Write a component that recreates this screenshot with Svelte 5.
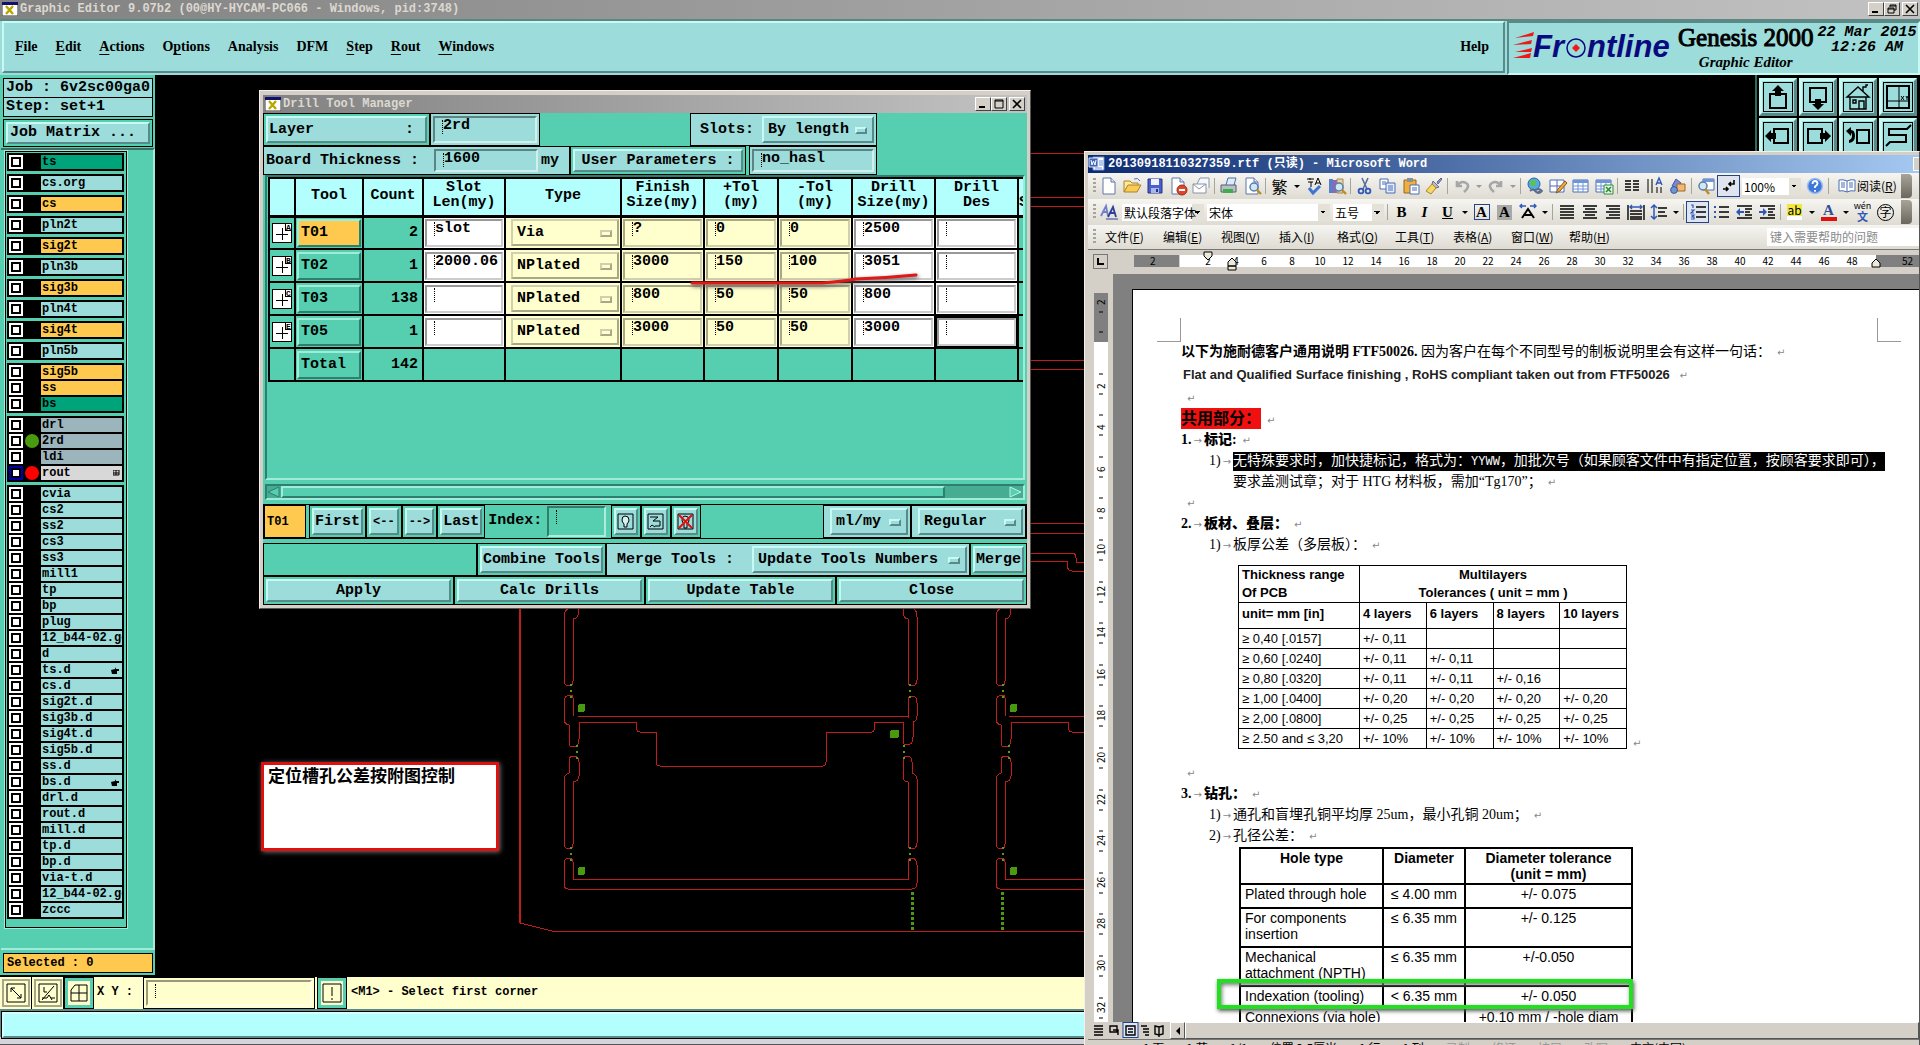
<script lang="ts">
  type Layer = { name: string; tone?: string; dot?: string; mark?: string };

  const menus = [
    ["", "F", "ile"],
    ["", "E", "dit"],
    ["", "A", "ctions"],
    ["O", "p", "tions"],
    ["Analysis", "", ""],
    ["DFM", "", ""],
    ["", "S", "tep"],
    ["", "R", "out"],
    ["", "W", "indows"],
  ];

  const layerGroups: Layer[][] = [
    [{ name: "ts", tone: "green" }],
    [{ name: "cs.org" }],
    [{ name: "cs", tone: "orange" }],
    [{ name: "pln2t" }],
    [{ name: "sig2t", tone: "orange" }],
    [{ name: "pln3b" }],
    [{ name: "sig3b", tone: "orange" }],
    [{ name: "pln4t" }],
    [{ name: "sig4t", tone: "orange" }],
    [{ name: "pln5b" }],
    [
      { name: "sig5b", tone: "orange" },
      { name: "ss", tone: "orange" },
      { name: "bs", tone: "green" },
    ],
    [
      { name: "drl", tone: "slate" },
      { name: "2rd", tone: "slate", dot: "lime" },
      { name: "ldi", tone: "slate" },
      { name: "rout", tone: "grey", dot: "red", mark: "grid" },
    ],
    [
      ..."cvia cs2 ss2 cs3 ss3 mill1 tp bp plug 12_b44-02.ge d".split(" ").map((name) => ({ name })),
      { name: "ts.d", mark: "hand" },
      ..."cs.d sig2t.d sig3b.d sig4t.d sig5b.d ss.d".split(" ").map((name) => ({ name })),
      { name: "bs.d", mark: "hand" },
      ..."drl.d rout.d mill.d tp.d bp.d via-t.d 12_b44-02.ge zccc".split(" ").map((name) => ({ name })),
    ],
  ];

  const tools = [
    { key: "A", tool: "T01", count: 2, slot: "slot", type: "Via", finish: "?", plus: "0", minus: "0", drill: "2500" },
    { key: "B", tool: "T02", count: 1, slot: "2000.06", type: "NPlated", finish: "3000", plus: "150", minus: "100", drill: "3051" },
    { key: "C", tool: "T03", count: 138, slot: "", type: "NPlated", finish: "800", plus: "50", minus: "50", drill: "800" },
    { key: "E", tool: "T05", count: 1, slot: "", type: "NPlated", finish: "3000", plus: "50", minus: "50", drill: "3000" },
  ];

  const viewTools = [
    ["Pan up", '<path d="M12 12H7v14h16V12h-5" fill="none" stroke="#000" stroke-width="2"/><path d="M15 3l6 6h-3v5h-6V9H9z"/>'],
    ["Pan down", '<path d="M12 20H7V6h16v14h-5" fill="none" stroke="#000" stroke-width="2"/><path d="M15 28l6-6h-3v-5h-6v5H9z"/>'],
    ["Home", '<path d="M4 15L15 5l11 10zM7 15v12h16V15M16 27v-8h5v8M10 18h3v3h-3zM20 9V5h3V3h2" fill="none" stroke="#000" stroke-width="1.4"/>'],
    ["Origin", '<path d="M4 4h22v22H4z" fill="none" stroke="#000" stroke-width="2"/><path d="M16 4v22M4 19h22" stroke="#000"/><path d="M18 14l3 4M21 14l-3 4M23 14l1 2 1-2M24 16v2" fill="none" stroke="#000"/>'],
    ["Pan left", '<path d="M11 11V7h14v14H11v-4" fill="none" stroke="#000" stroke-width="2"/><path d="M2 14l6-6v3h5v6H8v3z"/>'],
    ["Pan right", '<path d="M19 11V7H5v14h14v-4" fill="none" stroke="#000" stroke-width="2"/><path d="M28 14l-6-6v3h-5v6h5v3z"/>'],
    ["Previous view", '<path d="M14 8h12v13H14z" fill="none" stroke="#000" stroke-width="2"/><path d="M3 9l5-4v3q4 0 4 6t-6 7v-3q3-1 3-4t-1-3v3z"/>'],
    ["Serpentine", '<path d="M28 3l-4 4H6v6h17v7H7l-4 4" fill="none" stroke="#000" stroke-width="2"/>'],
  ];

  const page = '<path d="M4 2h8l4 4v12H4z" fill="#fff" stroke="#5f76a8"/><path d="M12 2v4h4" fill="#dbe6fa" stroke="#5f76a8"/>';
  const lens = '<circle cx="12" cy="11" r="4" fill="#cfe8f8" stroke="#5a7fa8" stroke-width="1.5"/><path d="M15 14l4 4" stroke="#c08a20" stroke-width="2.4"/>';
  const grid = '<path d="M2 4h15v12H2z" fill="#fff" stroke="#4a6cb4"/><path d="M2 4h15v3H2z" fill="#6f95d8"/><path d="M2 10h15M2 13h15M7 4v12M12 4v12" stroke="#6f95d8"/>';
  const lines = (rows: [number, number][]) =>
    `<path d="${rows.map(([x, w], i) => `M${x} ${4 + i * 3}h${w}`).join("")}" stroke="#000" stroke-width="1.6"/>`;

  const icons: Record<string, string> = {
    New: page,
    Open: '<path d="M2 16V5h6l2 2h6v3" fill="#ffe9a0" stroke="#a8822a"/><path d="M2 16l4-7h13l-4 7z" fill="#fbcb55" stroke="#a8822a"/><path d="M12 3q4-2 6 2" fill="none" stroke="#4a78c0"/>',
    Save: '<path d="M3 3h14v14H3z" fill="#4a5fc8" stroke="#26348a"/><path d="M6 3h8v6H6z" fill="#eef2ff"/><path d="M6 12h8v5H6z" fill="#aab6ea"/><path d="M11 13h2v3h-2z" fill="#26348a"/>',
    Permission: page + '<circle cx="14" cy="14" r="5" fill="#e0452a" stroke="#a02a16"/><path d="M11 14h6" stroke="#fff" stroke-width="2"/>',
    Mail: '<path d="M6 8l3-6h9v10" fill="#f6f8fc" stroke="#8894a8"/><path d="M2 8h13v9H2z" fill="#fff" stroke="#8894a8"/><path d="M2 8l6 5 7-5" fill="none" stroke="#8894a8"/>',
    Print: '<path d="M7 9l2-7h8l-2 7" fill="#dcecff" stroke="#4f6f9f"/><path d="M2 9h15v7H2z" fill="#b6bfc9" stroke="#56606c"/><path d="M4 13h10v4H4z" fill="#3fae4a"/>',
    Preview: page + lens,
    Spelling: '<path d="M3 3h7M6 2v2M4 6h5M7 6v5M11 9l3-7 3 7M12 7h4" fill="none" stroke="#000"/><path d="M5 12l4 5 7-7" fill="none" stroke="#3f74d6" stroke-width="3"/>',
    Research: '<path d="M2 3h4v14H2z" fill="#5a7fc8"/><path d="M6 4h4v13H6z" fill="#9a64b4"/><path d="M10 3h6v14h-6z" fill="#e8d8a8" stroke="#a08850"/>' + lens,
    Cut: '<path d="M7 2l5 11M13 2L8 13" stroke="#5a6f9a" stroke-width="1.6"/><circle cx="6" cy="15" r="2.4" fill="none" stroke="#2f58b8" stroke-width="1.8"/><circle cx="13" cy="15" r="2.4" fill="none" stroke="#2f58b8" stroke-width="1.8"/>',
    Copy: '<path d="M2 3h8v10H2z" fill="#fff" stroke="#4a6cb4"/><path d="M8 7h9v10H8z" fill="#e4edff" stroke="#4a6cb4"/><path d="M4 6h4M4 8h4M10 10h5M10 12h5M10 14h5" stroke="#4a6cb4"/>',
    Paste: '<path d="M3 4h12v13H3z" fill="#f0b040" stroke="#95681a"/><path d="M6 2h6v4H6z" fill="#8a8f98"/><path d="M9 9h9v9H9z" fill="#fff" stroke="#4a6cb4"/><path d="M11 12h5M11 14h5" stroke="#4a6cb4"/>',
    Brush: '<path d="M13 6l4-4 1 1-4 5z" fill="#8c98c8" stroke="#5a6494"/><path d="M9 5l6 6-3 1-4-4z" fill="#b8b8c8" stroke="#6a6a80"/><path d="M8 8l4 4-5 6-5-3z" fill="#f8d860" stroke="#a88a28"/>',
    Undo: '<path d="M5 5v5h5M5 10q4-6 9-3t-2 9" fill="none" stroke="#a6a6a6" stroke-width="2.6"/>',
    Redo: '<path d="M15 5v5h-5M15 10q-4-6-9-3t2 9" fill="none" stroke="#a6a6a6" stroke-width="2.6"/>',
    Hyperlink: '<circle cx="9" cy="8" r="6" fill="#54a8e8" stroke="#2a64a0"/><path d="M5 5q4-3 6 0t-3 6q-4-1-3-6" fill="#5cc060"/><path d="M5 15q3-3 5 0t5 0M10 15q3-4 7 0-3 4-7 0" fill="none" stroke="#5a6c8c" stroke-width="1.8"/>',
    Borders: '<path d="M2 4h14v12H2z" fill="#fff" stroke="#4a6cb4"/><path d="M9 4v12M2 10h14" stroke="#4a6cb4"/><path d="M8 17l2-4 7-8 2 2-7 8z" fill="#f0a840" stroke="#8a5a14"/>',
    Table: grid,
    Excel: grid + '<path d="M10 9h9v9h-9z" fill="#e6f6e6" stroke="#2f8a3a"/><path d="M12 11l5 5M17 11l-5 5" stroke="#2f8a3a" stroke-width="1.6"/>',
    Columns: '<path d="M3 5h6M3 8h6M3 11h6M3 14h6M11 5h6M11 8h6M11 11h6M11 14h6" stroke="#000" stroke-width="1.6"/>',
    Direction: '<path d="M3 3v14M7 3v14M12 11v6M16 11v6" stroke="#000"/><path d="M11 9l3-7 3 7M12 7h4" fill="none" stroke="#2f58b8" stroke-width="1.4"/>',
    Drawing: '<path d="M4 10l4-7 5 4-2 6z" fill="#7a88d8" stroke="#4a54a0"/><path d="M9 8h8v7H9z" fill="#f4b870" stroke="#9a6a28"/><circle cx="6" cy="14" r="3.4" fill="#6f95d8" stroke="#3a5a9a"/>',
    Map: '<path d="M7 3h11v11H7z" fill="#fff" stroke="#4a6cb4"/><path d="M7 3h11v3H7z" fill="#6f95d8"/><circle cx="7" cy="10" r="4" fill="#cfe8f8" stroke="#5a7fa8" stroke-width="1.5"/><path d="M9 13l4 5" stroke="#c08a20" stroke-width="2.4"/>',
    Marks: '<path d="M15 4v4h-5M12 6l-2 2 2 2M4 13h5M7 11l2 2-2 2" fill="none" stroke="#000" stroke-width="1.6"/>',
    Help: '<circle cx="10" cy="10" r="7.5" fill="#3f78d8" stroke="#9fc0f0" stroke-width="1.5"/><path d="M7.5 8q0-3 2.500-3t2.500 2.500q0 1.500-2.500 3v1.500M10 14v1.800" fill="none" stroke="#fff" stroke-width="1.8"/>',
    Read: '<path d="M2 4q4-1 8 1 4-2 8-1v11q-4-1-8 1-4-2-8-1z" fill="#fff" stroke="#4a6cb4"/><path d="M10 5v11M4 7h4M4 9h4M4 11h4M12 7h4M12 9h4M12 11h4" stroke="#4a6cb4"/>',
    Styles: '<path d="M2 14l5-10 2 10M4 10h5" fill="none" stroke="#6f7fc8" stroke-width="1.8"/><path d="M9 15l5-10 3 10M11 11h5" fill="none" stroke="#2f3f98" stroke-width="1.8"/><path d="M7 17h12" stroke="#2f3f98"/>',
    Scale: '<path d="M4 16l6-9 6 9M6 13h8" fill="none" stroke="#000" stroke-width="2"/><path d="M2 4h6M12 4h6M4 2L2 4l2 2M16 2l2 2-2 2" fill="none" stroke="#2f58b8" stroke-width="1.4"/>',
    Justify: lines([[3, 14], [3, 14], [3, 14], [3, 14], [3, 14]]),
    Center: lines([[3, 14], [5, 10], [3, 14], [5, 10], [3, 14]]),
    Right: lines([[3, 14], [6, 11], [3, 14], [6, 11], [3, 14]]),
    Distribute: '<path d="M2 3v15M18 3v15M4 9h12M4 12h12M4 15h12M4 17h12" stroke="#000" stroke-width="1.4"/><path d="M4 5h12M6 3L4 5l2 2M14 3l2 2-2 2" fill="none" stroke="#2f58b8" stroke-width="1.4"/>',
    Spacing: '<path d="M9 6h9M9 10h7M9 14h9" stroke="#000" stroke-width="1.6"/><path d="M5 3v14M2 6l3-3 3 3M2 14l3 3 3-3" fill="none" stroke="#2f58b8" stroke-width="1.5"/>',
    Numbering: '<path d="M8 5h10M8 10h10M8 15h10" stroke="#000" stroke-width="1.4"/><path d="M3 3h2v3M3 8h3l-3 3h3M3 13h3l-2 2h2v2H3" fill="none" stroke="#2f58b8" stroke-width="1.2"/>',
    Bullets: '<path d="M8 5h10M8 10h10M8 15h10" stroke="#000" stroke-width="1.4"/><path d="M3 4h2v2H3zM3 9h2v2H3zM3 14h2v2H3z" fill="#2f58b8"/>',
    Outdent: '<path d="M3 4h15M11 7h7M11 10h5M11 13h7M3 16h15" stroke="#000" stroke-width="1.6"/><path d="M2 10l4-4v3h4v2H6v3z" fill="#2f58b8"/>',
    Indent: '<path d="M3 4h15M11 7h7M11 10h5M11 13h7M3 16h15" stroke="#000" stroke-width="1.6"/><path d="M10 10L6 6v3H2v2h4v3z" fill="#2f58b8"/>',
  };

  const toolbar = [
    "New", "Open", "Save", "Permission", "Mail", "|", "Print", "Preview", "|", "繁", "v", "Spelling", "Research", "|",
    "Cut", "Copy", "Paste", "Brush", "|", "Undo", "w", "Redo", "w", "|", "Hyperlink", "Borders", "Table", "Excel", "|",
    "Columns", "Direction", "Drawing", "|", "Map", "Marks",
  ];
  const formatting = [
    "|", "B", "I", "U", "v", "boxed", "shaded", "Scale", "v", "|", "Justify", "Center", "Right", "Distribute", "Spacing",
    "v", "|", "Numbering", "Bullets", "Outdent", "Indent", "|", "ab", "v", "color", "v", "wén", "字",
  ];
  const wordMenus = [
    ["文件", "F"], ["编辑", "E"], ["视图", "V"], ["插入", "I"], ["格式", "O"],
    ["工具", "T"], ["表格", "A"], ["窗口", "W"], ["帮助", "H"],
  ];

  const rulerMarks = Array.from({ length: 24 }, (_, i) => 2 + i * 2);
  const sideMarks = Array.from({ length: 16 }, (_, i) => 2 + i * 2);

  const thickness = [
    ["≥ 0,40 [.0157]", "+/- 0,11", "", "", ""],
    ["≥ 0,60 [.0240]", "+/- 0,11", "+/- 0,11", "", ""],
    ["≥ 0,80 [.0320]", "+/- 0,11", "+/- 0,11", "+/- 0,16", ""],
    ["≥ 1,00  [.0400]", "+/- 0,20", "+/- 0,20", "+/- 0,20", "+/- 0,20"],
    ["≥ 2,00  [.0800]", "+/- 0,25", "+/- 0,25", "+/- 0,25", "+/- 0,25"],
    ["≥ 2.50 and  ≤ 3,20", "+/- 10%", "+/- 10%", "+/- 10%", "+/- 10%"],
  ];
  const holes = [
    ["Plated through hole", "≤ 4.00 mm", "+/- 0.075"],
    ["For components insertion", "≤ 6.35 mm", "+/- 0.125"],
    ["Mechanical attachment (NPTH)", "≤ 6.35 mm", "+/-0.050"],
    ["Indexation (tooling)", "< 6.35 mm", "+/- 0.050"],
  ];
</script>

{#snippet icon(name: string)}
  <svg class="icon" width="20" height="20" viewBox="0 0 20 20" aria-hidden="true">{@html icons[name]}</svg>
{/snippet}

{#snippet entry(label: string, value: string)}
  <span class="entry"><input aria-label={label} {value} /></span>
{/snippet}

{#snippet pick(label: string, value: string)}
  <span class="pick"><select aria-label={label}><option>{value}</option></select></span>
{/snippet}

{#snippet appIcon()}
  <svg class="app-icon" width="16" height="14" viewBox="0 0 16 14" aria-hidden="true">
    <path d="M0 0h16v14H0z" fill="#fff" stroke="#333" />
    <path d="M0 0h16v3H0z" fill="#101070" />
    <path d="M4 4l7 8M11 4l-7 8" stroke="#b8a800" stroke-width="2.400" />
  </svg>
{/snippet}

{#snippet windowButtons(restore: boolean)}
  <span class="win-buttons">
    <button aria-label="Minimize"><svg width="12" height="10"><path d="M2 8h6" stroke="#000" stroke-width="2" /></svg></button>
    <button aria-label="Maximize">
      <svg width="12" height="10">
        {#if restore}
          <path d="M4 3V1h6v5H8M2 4h6v5H2zM4 2h6M2 5h6" fill="none" stroke="#000" />
        {:else}
          <path d="M2 1h8v8H2zM2 2h8" fill="none" stroke="#000" />
        {/if}
      </svg>
    </button>
    <button class="close" aria-label="Close"><svg width="12" height="10"><path d="M2 1l8 8M10 1l-8 8" stroke="#000" stroke-width="1.600" /></svg></button>
  </span>
{/snippet}

{#snippet bar(items: string[])}
  {#each items as item}
    {#if item === "|"}
      <span class="sep"></span>
    {:else if item === "v" || item === "w"}
      <button class="drop" class:faded={item === "w"} aria-label="More options"></button>
    {:else if icons[item]}
      <button class="tb" class:on={item === "Marks" || item === "Numbering"} aria-label={item}>{@render icon(item)}</button>
    {:else if item === "boxed" || item === "shaded"}
      <button class="tb serif {item}"><span>A</span></button>
    {:else if item === "ab"}
      <button class="tb mark"><span>ab</span></button>
    {:else if item === "color"}
      <button class="tb serif color"><span>A</span></button>
    {:else if item === "wén"}
      <button class="tb pinyin"><span>wén</span><b>文</b></button>
    {:else if item === "字"}
      <button class="tb ring"><span>字</span></button>
    {:else if item === "繁"}
      <button class="tb trad">繁</button>
    {:else}
      <button class="tb serif letter-{item}">{item}</button>
    {/if}
  {/each}
{/snippet}

<div class="desktop">
  <header class="title">
    {@render appIcon()}
    <span>Graphic Editor 9.07b2 (00@HY-HYCAM-PC066 - Windows, pid:3748)</span>
    {@render windowButtons(true)}
  </header>

  <div class="top">
    <nav class="menubar">
      {#each menus as [before, key, after]}
        <button>{before}<u>{key}</u>{after}</button>
      {/each}
      <button class="help">Help</button>
    </nav>
    <div class="brand">
      <svg width="162" height="46" viewBox="0 -5 162 46" role="img" aria-label="Frontline">
        <path d="M2 8l19-6-1 4zM0 15l19-5-1 4zM2 22l17-4-1 4zM0 28l18-5-1 5z" fill="#f01818" />
        <g fill="#0a0a80" font-family="Liberation Sans, sans-serif" font-size="31" font-weight="bold" font-style="italic">
          <text x="20" y="27">Fr</text>
          <text x="74" y="27">ntline</text>
        </g>
        <circle cx="63" cy="18" r="9" fill="none" stroke="#0a0a80" stroke-width="1.500" />
        <path d="M63 14l4 4-4 4-4-4z" fill="#f01818" />
      </svg>
      <div class="product">
        <strong>Genesis 2000</strong>
        <em>Graphic Editor</em>
      </div>
      <time>22 Mar 2015<br />12:26 AM</time>
    </div>
  </div>

  <div class="work">
    <aside>
      <div class="job">
        <div>Job : 6v2sc00ga0</div>
        <div>Step: set+1</div>
      </div>
      <div class="matrix"><button>Job Matrix ...</button></div>
      <div class="layers">
        <div class="layer-list">
          {#each layerGroups as group}
            <ul>
              {#each group as layer}
                <li>
                  <input type="checkbox" aria-label={layer.name} class:active={layer.name === "rout"} />
                  <i class={layer.dot ?? ""}></i>
                  <span class="layer {layer.tone ?? ''}">{layer.name}</span>
                  {#if layer.mark === "grid"}
                    <svg class="mark-icon" width="7" height="7"><path d="M0 0h6v5H0zM3 0v5M0 3h6" fill="none" stroke="#000" /></svg>
                  {:else if layer.mark === "hand"}
                    <svg class="mark-icon" width="9" height="8"><path d="M0 3l4-1 1-2v2h3v2H6v3H1z" /></svg>
                  {/if}
                </li>
              {/each}
            </ul>
          {/each}
        </div>
      </div>
      <div class="selected"><span>Selected : 0</span></div>
    </aside>

    <main>
      <svg class="artwork" width="100%" height="100%" fill="none" stroke="#c01c1c" shape-rendering="crispEdges">
        <g transform="translate(-155 -75)">
          <path d="M520 609V923" stroke-width="2" />
          <path d="M520 923L552 931H1920" />
          <path d="M1030 153h60M1030 197h60M1030 206h60M1030 360h60M1030 369h60M1030 523h60M1030 533h60M1030 553h42q4 0 4 5v4h10M1030 561h37v5q1 5 5 5h14" />
          {#each [0, 432] as shift}
            <g transform="translate({shift} 0)">
              <path d="M568 609q-4 2-4 8V680q0 6 6 6q3 0 3-5V619q6 0 6-10" />
              <path d="M914 609q3 2 3 8V680q0 6-6 6q-3 0-3-5V619q-5 0-5-10" />
              <path d="M573 716V698q0-3-3-3q-6 0-6 8v16q0 5 5 6v18q0 4 4 4q6 0 6-8v-17h57v6q1 4 4 4h16v30q0 4 4 4H823q3 0 3-4v-30h46q3 0 3-10h28v19q0 4 4 4q6 0 6-8v-15q4-1 4-6v-13q0-7-5-7q-4 0-4 3v18z" />
              <path d="M569 762q0-6 4-6q6 0 6 6v14q-1 6-6 6v62q0 5-3 5q-6 0-6-6v-64q1-5 5-6z" />
              <path d="M912 762q0-6-5-6q-4 0-4 6v14q0 6 5 6v62q0 5 3 5q6 0 6-6v-64q-1-5-5-6z" />
              <path d="M573 879V862q0-4-4-4q-5 0-5 7v19q0 5 4 5H912q5 0 5-6v-18q0-7-6-7q-3 0-3 4v17z" />
              <g fill="#4a9a10" stroke="none">
                <rect x="578" y="704" width="7" height="8" rx="2" />
                <rect x="578" y="867" width="7" height="8" rx="2" />
                <rect x="890" y="730" width="9" height="8" rx="2" />
              </g>
              <path d="M571 684v14M910 684v14M577 745v14M904 745v14M571 847v14M910 847v14" stroke="#5c9a20" stroke-width="2" stroke-dasharray="2 4" />
            </g>
          {/each}
          <path d="M912 892v38M1002 892v38" stroke="#4a9a10" stroke-width="3" stroke-dasharray="3 2" />
        </g>
      </svg>
      <div class="note">定位槽孔公差按附图控制</div>
      <div class="toolbox">
        {#each viewTools as [label, shape]}
          <button aria-label={label}><svg width="30" height="30" viewBox="0 0 30 30">{@html shape}</svg></button>
        {/each}
      </div>
    </main>
  </div>

  <div class="prompt">
    <button class="cream" aria-label="Pan"><svg width="20" height="20"><path d="M1 1h18v18H1zM5 5l10 10M5 9V5h4M15 11v4h-4" fill="none" stroke="#000" /></svg></button>
    <button class="cream" aria-label="Angle"><svg width="20" height="20"><path d="M1 1h18v18H1zM4 17L16 3M6 4v5h3M4 15h5l2-3 3 5M13 15h4" fill="none" stroke="#000" /></svg></button>
    <button class="framed" aria-label="Grid"><svg width="20" height="20"><path d="M6 2h12v16H2V7zM10 2v16M2 10h16" fill="none" stroke="#000" /></svg></button>
    <label for="xy">X Y :</label>
    <span class="entry"><input id="xy" /></span>
    <button class="framed" aria-label="Alert"><svg width="20" height="20"><path d="M1 1h18v18H1zM10 4v9M10 15v2" fill="none" stroke="#000" /></svg></button>
    <output>&lt;M1&gt; - Select first corner</output>
  </div>
  <footer><div></div></footer>

  <section class="drill" aria-label="Drill Tool Manager">
    <div class="title">
      {@render appIcon()}
      <span>Drill Tool Manager</span>
      {@render windowButtons(false)}
    </div>
    <div class="drill-body">
      <div class="row">
        <div class="box layer-name"><button class="wide">Layer<span>:</span></button></div>
        <div class="box teal layer-value">{@render entry("Layer", "2rd")}</div>
        <div class="box teal slots">Slots: {@render pick("Slots", "By length")}</div>
      </div>
      <div class="row second">
        <div class="box teal board"><span>Board Thickness :</span>{@render entry("Board thickness", "1600")}<span>my</span></div>
        <div class="box params"><button>User Parameters :</button></div>
        <div class="box teal hasl">{@render entry("User parameters", "no_hasl")}</div>
      </div>

      <div class="table-frame">
        <table class="tools">
          <colgroup>
            <col class="c26" /><col class="c68" /><col class="c60" /><col class="c82" /><col class="c116" /><col class="c83" />
            <col class="c74" /><col class="c74" /><col class="c83" /><col class="c83" /><col />
          </colgroup>
          <thead>
            <tr>
              <th></th><th>Tool</th><th>Count</th><th>Slot<br />Len(my)</th><th>Type</th><th>Finish<br />Size(my)</th>
              <th>+Tol<br />(my)</th><th>-Tol<br />(my)</th><th>Drill<br />Size(my)</th><th>Drill<br />Des</th><th class="next">&nbsp;<br />S</th>
            </tr>
          </thead>
          <tbody>
            {#each tools as t}
              <tr>
                <td>
                  <svg class="sym" width="20" height="20" shape-rendering="crispEdges">
                    <path d="M0 0h20v20H0z" fill="#fff" stroke="#000" stroke-width="2" />
                    <path d="M4 11h12M10 5v12M13 0v7h7" fill="none" stroke="#000" />
                    <text x="14" y="7">{t.key}</text>
                  </svg>
                </td>
                <td><button class:current={t.tool === "T01"}>{t.tool}</button></td>
                <td class="num">{t.count}</td>
                <td class="white">{@render entry("Slot length " + t.tool, t.slot)}</td>
                <td class="yellow">{@render pick("Type " + t.tool, t.type)}</td>
                <td class="yellow">{@render entry("Finish size " + t.tool, t.finish)}</td>
                <td class="yellow">{@render entry("Plus tolerance " + t.tool, t.plus)}</td>
                <td class="yellow">{@render entry("Minus tolerance " + t.tool, t.minus)}</td>
                <td class="white">{@render entry("Drill size " + t.tool, t.drill)}</td>
                <td class="white" class:focus={t.tool === "T05"}>{@render entry("Drill designator " + t.tool, "")}</td>
                <td></td>
              </tr>
            {/each}
            <tr>
              <td></td><td><button>Total</button></td><td class="num">142</td>
              {#each { length: 8 } as _}<td></td>{/each}
            </tr>
          </tbody>
        </table>
      </div>
      <div class="hscroll">
        <svg width="14" height="12"><path d="M12 1L1 6l11 5z" fill="#55cfb0" stroke="#2f7f70" /></svg>
        <span class="thumb"></span>
        <svg width="14" height="12"><path d="M1 1l11 5-11 5z" fill="#55cfb0" stroke="#b8f4e4" /></svg>
      </div>

      <div class="row nav">
        <div class="box current-tool">T01</div>
        <div class="box"><button>First</button></div>
        <div class="box"><button class="arrow">&lt;--</button></div>
        <div class="box"><button class="arrow">--&gt;</button></div>
        <div class="box"><button>Last</button></div>
        <label for="idx">Index:</label>
        <span class="entry index"><input id="idx" /></span>
        <div class="box"><button class="sq" aria-label="Highlight"><svg width="18" height="18"><path d="M1 1h15v15H1z" fill="none" stroke="#000" /><path d="M8 3q-3 0-3 4 0 2 2 4v3h3v-3q2-2 2-4 0-4-4-4z" fill="#d8f0ee" stroke="#000" /></svg></button></div>
        <div class="box"><button class="sq" aria-label="Zoom to tool"><svg width="18" height="18"><path d="M1 1h15v15H1zM3 4h8l-5 4h7v5H8M3 14l2-2 3 2" fill="none" stroke="#000" /></svg></button></div>
        <div class="box"><button class="sq" aria-label="Clear highlight"><svg width="18" height="18"><path d="M1 1h15v15H1z" fill="none" stroke="#000" /><path d="M8 3q-3 0-3 4 0 2 2 4v4h3v-4q2-2 2-4 0-4-4-4z" fill="#b8d8d6" stroke="#000" /><path d="M2 2l13 13M15 2L2 15" stroke="#e01010" stroke-width="2" /></svg></button></div>
        <div class="box teal units">{@render pick("Units", "ml/my")}</div>
        <div class="box teal mode">{@render pick("Mode", "Regular")}</div>
      </div>
      <div class="row merge">
        <div class="box blank"></div>
        <div class="box"><button>Combine Tools</button></div>
        <div class="box teal merge-tools">Merge Tools : {@render pick("Merge tools", "Update Tools Numbers")}</div>
        <div class="box"><button>Merge</button></div>
      </div>
      <div class="row actions">
        {#each ["Apply", "Calc Drills", "Update Table", "Close"] as action}
          <div class="box"><button>{action}</button></div>
        {/each}
      </div>
    </div>
    <svg class="scribble" width="232" height="20"><path d="M3 12h130q24-2 34-4 30-1 60-4" fill="none" stroke="#e01818" stroke-width="3" stroke-linecap="round" /></svg>
  </section>

  <section class="word" aria-label="Microsoft Word">
    <div class="word-title">
      <svg width="18" height="16" viewBox="0 0 18 16" aria-hidden="true">
        <path d="M5 1h11v13H5z" fill="#fff" stroke="#6f90d0" /><path d="M1 2h9v9H1z" fill="#3f66b8" stroke="#d8e4ff" />
        <path d="M3 4l1 5 1.500-4L7 9l1-5" fill="none" stroke="#fff" /><path d="M11 5h4M11 7h4M11 9h4M7 12h7" stroke="#6f90d0" />
      </svg>
      <span>20130918110327359.rtf (只读) - Microsoft Word</span>
      <button aria-label="Minimize"></button>
    </div>
    <div class="tools-row">
      <i class="grip"></i>
      {@render bar(toolbar)}
      <select class="combo zoom" aria-label="Zoom"><option>100%</option></select>
      <button class="tb" aria-label="Help">{@render icon("Help")}</button>
      <span class="sep"></span>
      <button class="read">{@render icon("Read")}阅读(<u>R</u>)</button>
      <i class="cap"></i>
    </div>
    <div class="tools-row">
      <i class="grip"></i>
      <button class="tb" aria-label="Styles">{@render icon("Styles")}</button>
      <select class="combo style" aria-label="Style"><option>默认段落字体</option></select>
      <select class="combo font" aria-label="Font"><option>宋体</option></select>
      <select class="combo size" aria-label="Size"><option>五号</option></select>
      {@render bar(formatting)}
      <i class="cap"></i>
    </div>
    <div class="word-menu">
      <i class="grip"></i>
      {#each wordMenus as [name, key]}
        <button>{name}(<u>{key}</u>)</button>
      {/each}
      <input aria-label="Ask a question" placeholder="键入需要帮助的问题" />
    </div>
    <div class="ruler">
      <span class="tab-kind"></span>
      <div class="scale">
        <span class="outside left">2</span>
        <div class="inside">
          {#each rulerMarks as n}<span>{n}</span>{/each}
        </div>
        <span class="outside right">52</span>
        <svg class="indents" width="40" height="20" aria-hidden="true">
          <path d="M6 1h8v4l-4 4-4-4zM30 15v-4l4-4 4 4v4zM30 15h8v4h-8z" fill="#ece9d8" stroke="#000" />
        </svg>
        <svg class="right-indent" width="12" height="10" aria-hidden="true"><path d="M2 9V5l4-4 4 4v4z" fill="#ece9d8" stroke="#000" /></svg>
      </div>
    </div>
    <div class="doc">
      <svg class="side-ruler" width="14" height="740" aria-hidden="true">
        <rect width="14" height="49" fill="#808080" />
        <rect y="49" width="14" height="691" fill="#fff" />
        <text transform="translate(11 12) rotate(-90)">2</text>
        <path d="M5 19h4M5 39h4" stroke="#000" />
        {#each sideMarks as n}
          <text transform="translate(11 {Math.round(54 + n * 20.8)}) rotate(-90)">{n}</text>
          <path d="M5 {Math.round(49 + n * 20.8) - 10}h4m-4 20h4" stroke="#000" />
        {/each}
      </svg>
      <div class="paper-area">
        <article>
          <i class="corner tl"></i><i class="corner tr"></i>
          <p><b>以下为施耐德客户通用说明 FTF50026.</b> 因为客户在每个不同型号的制板说明里会有这样一句话：<s>↵</s></p>
          <p class="quote">Flat and Qualified Surface finishing , RoHS compliant taken out from FTF50026 <s>↵</s></p>
          <p><s>↵</s></p>
          <p><b class="hot">共用部分：</b><s>↵</s></p>
          <p class="head">1.<s>→</s><b>标记:</b><s>↵</s></p>
          <p class="item">1)<s>→</s><mark>无特殊要求时，加快捷标记，格式为：<span>YYWW</span>，加批次号（如果顾客文件中有指定位置，按顾客要求即可），</mark></p>
          <p class="cont">要求盖测试章；对于 HTG 材料板，需加“Tg170”；<s>↵</s></p>
          <p><s>↵</s></p>
          <p class="head">2.<s>→</s><b>板材、叠层：</b><s>↵</s></p>
          <p class="item">1)<s>→</s>板厚公差（多层板）：<s>↵</s></p>
          <div class="figure">
            <table class="thick">
              <thead>
                <tr><th>Thickness range<br />Of PCB</th><th colspan="4" class="mid">Multilayers<br />Tolerances ( unit = mm )</th></tr>
                <tr class="sub"><th>unit= mm [in]</th><th>4 layers</th><th>6 layers</th><th>8 layers</th><th>10 layers</th></tr>
              </thead>
              <tbody>
                {#each thickness as row}
                  <tr>{#each row as cell}<td>{cell}</td>{/each}</tr>
                {/each}
              </tbody>
            </table>
            <s>↵</s>
          </div>
          <p><s>↵</s></p>
          <p class="head">3.<s>→</s><b>钻孔：</b><s>↵</s></p>
          <p class="item">1)<s>→</s>通孔和盲埋孔铜平均厚 25um，最小孔铜 20um；<s>↵</s></p>
          <p class="item">2)<s>→</s>孔径公差：<s>↵</s></p>
          <div class="hole-box">
            <table class="holes">
              <thead>
                <tr><th>Hole type</th><th>Diameter</th><th>Diameter tolerance<br />(unit = mm)</th></tr>
              </thead>
              <tbody>
                {#each holes as [type, size, tol]}
                  <tr><td>{type}</td><td class="mid">{size}</td><td class="mid">{tol}</td></tr>
                {/each}
                <tr><td colspan="2">Connexions (via hole)</td><td class="mid">+0.10 mm / -hole diam</td></tr>
              </tbody>
            </table>
            <i class="frame"></i>
          </div>
        </article>
      </div>
    </div>
    <div class="views">
      <svg width="78" height="16" aria-hidden="true">
        <rect x="31" y="0.500" width="15" height="15" fill="#dfe6f4" stroke="#22448c" />
        <path d="M2 4h9M2 7h9M2 10h9M2 13h9M18 4h7v6h-7zM21 8h5v5M34 4h9v9h-9zM36 7h5M36 10h5M49 4h6M51 7h6M51 10h6M53 13h4M63 4l4 1 4-1v8l-4 1-4-1zM67 5v10" fill="none" stroke="#000" stroke-width="1.400" />
      </svg>
      <button aria-label="Scroll left"><svg width="8" height="10"><path d="M6 1v8L2 5z" /></svg></button>
      <span class="track"></span>
    </div>
    <div class="status">
      <span>1 页</span><span>1 节</span><span>1/1</span><span>位置 2.5厘米</span><span>1 行</span><span>1 列</span>
      <span class="dim">录制</span><span class="dim">修订</span><span class="dim">扩展</span><span class="dim">改写</span><span>中文(中国)</span>
    </div>
  </section>
</div>

<style>
  :global(body) {
    background: #000;
  }

  *,
  *::before,
  *::after {
    box-sizing: border-box;
  }

  .desktop {
    --mono: "Liberation Mono", monospace;
    --han: "Noto Sans CJK SC", sans-serif;
    --teal: #9cdcda;
    --green: #55cfb0;
    --lit: #c8faf4;
    --shade: #578a88;
    position: relative;
    display: flex;
    flex-direction: column;
    height: 100vh;
    overflow: hidden;
    background: #000;
    color: #000;
    font: bold 15px/18px var(--mono);
  }

  button,
  input,
  select {
    margin: 0;
    padding: 0;
    border: 0;
    border-radius: 0;
    background: none;
    color: inherit;
    font: inherit;
    appearance: none;
  }

  /* title bars */
  .title {
    display: flex;
    align-items: center;
    flex: none;
    height: 19px;
    padding: 0 2px 1px;
    background: linear-gradient(90deg, #828282, #c2c2c2);
    color: #dcd8d0;
    font: bold 12px/16px var(--mono);
    white-space: nowrap;
  }

  .app-icon {
    margin-right: 2px;
  }

  .win-buttons {
    display: flex;
    margin-left: auto;
  }

  .win-buttons button {
    display: flex;
    align-items: center;
    justify-content: center;
    width: 16px;
    height: 14px;
    border: 1px solid;
    border-color: #fff #444 #444 #fff;
    background: #d4d0c8;
  }

  .win-buttons .close {
    margin-left: 2px;
  }

  /* main header */
  .top {
    display: flex;
    flex: none;
    height: 56px;
    border-top: 2px solid #5c8884;
    background: var(--teal);
  }

  .menubar,
  .brand {
    display: flex;
    align-items: center;
    border: 2px solid;
  }

  .menubar {
    flex: 1;
    gap: 18px;
    margin: 0 2px 2px;
    padding: 0 14px 0 11px;
    border-color: var(--lit) var(--shade) var(--shade) var(--lit);
    font: bold 14px/18px "Liberation Serif", serif;
  }

  .menubar u {
    text-underline-offset: 3px;
  }

  .help {
    margin-left: auto;
  }

  .brand {
    width: 413px;
    padding-left: 4px;
    border-color: var(--shade) var(--lit) var(--lit) var(--shade);
    white-space: nowrap;
  }

  .product {
    display: flex;
    flex-direction: column;
    align-items: center;
    margin-left: 3px;
    font-family: "Liberation Serif", serif;
  }

  .product strong {
    font-size: 25px;
    font-weight: normal;
    line-height: 28px;
    -webkit-text-stroke: 1px #000;
  }

  .product em {
    font-size: 15px;
    line-height: 20px;
  }

  time {
    margin: 0 0 16px 4px;
    font-style: italic;
    text-align: center;
    line-height: 15px;
  }

  .work {
    display: flex;
    flex: 1;
    min-height: 0;
  }

  /* layer panel */
  aside {
    display: flex;
    flex-direction: column;
    flex: none;
    width: 155px;
    padding: 3px 2px 2px 3px;
    background: var(--green);
    white-space: nowrap;
  }

  .job div {
    height: 20px;
    margin-bottom: -1px;
    padding-left: 2px;
    border: 1px solid #000;
    background: var(--teal);
  }

  .matrix {
    margin-top: 3px;
    padding: 2px;
    border: 1px solid #000;
  }

  .matrix button {
    display: block;
    width: 100%;
    padding-left: 2px;
    text-align: left;
  }

  .matrix button,
  .box button,
  .tools td button {
    height: 22px;
    border: 2px solid;
    border-color: var(--lit) var(--shade) var(--shade) var(--lit);
    background: var(--teal);
  }

  .layers {
    flex: 1;
    margin: 1px -2px 0 -2px;
    padding: 1px 26px 20px 4px;
    border: 2px solid;
    border-color: #3a7064 #a0ecd8 #a0ecd8 #3a7064;
    border-left-width: 0;
  }

  .layer-list {
    height: 100%;
    border: 1px solid #000;
    outline: 1px solid #a0ecd8;
  }

  ul {
    display: flex;
    flex-direction: column;
    gap: 2px;
    margin: 1px 2px 3px 1px;
    padding: 2px;
    background: #000;
    font: bold 12px/14px var(--mono);
    list-style: none;
  }

  li {
    position: relative;
    display: flex;
    height: 14px;
  }

  li input {
    flex: none;
    width: 14px;
    height: 14px;
    border: 2px solid #fff;
    background: #fff;
    box-shadow: inset 0 0 0 2px #000;
  }

  li input.active {
    border-color: #0000a8;
  }

  li i {
    flex: none;
    width: 14px;
    margin: 0 2px;
    border-radius: 7px;
  }

  .lime {
    background: #4a9a10;
  }

  .red {
    background: #f00;
  }

  .layer {
    flex: 1;
    overflow: hidden;
    padding-left: 1px;
    background: var(--teal);
  }

  .layer.green {
    background: #00a47a;
  }

  .layer.orange {
    background: #ffc84e;
  }

  .layer.slate {
    background: #9cb4bc;
  }

  .layer.grey {
    background: #d8d8d8;
  }

  .mark-icon {
    position: absolute;
    top: 4px;
    right: 2px;
  }

  .selected {
    padding-top: 3px;
    font: bold 12px/18px var(--mono);
  }

  .selected span {
    display: block;
    padding-left: 3px;
    border: 1px solid #000;
    background: #ffc84e;
  }

  /* drawing area */
  main {
    position: relative;
    flex: 1;
  }

  .artwork {
    display: block;
    position: absolute;
  }

  .note {
    position: absolute;
    top: 687px;
    left: 106px;
    width: 238px;
    height: 89px;
    padding: 1px 4px;
    border: 3px solid #e01010;
    background: #fff;
    box-shadow: 1px 1px 5px #777;
    font: bold 17px/18px var(--han);
  }

  .toolbox {
    position: absolute;
    top: 0;
    right: 0;
    display: grid;
    grid-template-columns: repeat(4, 38px);
    gap: 2px;
    padding: 3px 3px 3px 2px;
    border-left: 2px solid #2f6a5a;
    background: #000;
  }

  .toolbox button {
    display: flex;
    align-items: center;
    justify-content: center;
    height: 38px;
    border: 3px solid;
    border-color: var(--lit) var(--shade) var(--shade) var(--lit);
    outline: 1px solid #000;
    outline-offset: -5px;
    background: var(--teal);
  }

  /* prompt line */
  .prompt {
    display: flex;
    flex: none;
    height: 34px;
    border-top: 2px solid #000;
    background: #ffffce;
    font: bold 12px/18px var(--mono);
  }

  .prompt button {
    display: flex;
    align-items: center;
    justify-content: center;
    flex: none;
    width: 32px;
    border-right: 1px solid #000;
    outline: 2px solid #a8a888;
    outline-offset: -4px;
  }

  .prompt button.framed {
    width: 30px;
    border: 1px solid #000;
    outline: 3px solid var(--green);
    outline-offset: -4px;
  }

  .prompt label {
    width: 49px;
    padding: 6px 3px;
  }

  .prompt .entry {
    width: 172px;
    margin-right: 2px;
    border: 1px solid #000;
  }

  .prompt output {
    padding: 6px 4px;
  }

  footer {
    flex: none;
    height: 36px;
    padding: 3px 3px 6px 2px;
    border-bottom: 1px solid #555;
    background: linear-gradient(#5c8b88 28px, #d4d4dc 28px);
  }

  footer div {
    height: 26px;
    border: 2px solid;
    border-color: #d8ffff #5c8b88 #5c8b88 #d8ffff;
    outline: 1px solid #000;
    background: #b3fffd;
  }

  /* shared Motif fields */
  .entry {
    display: flex;
    padding: 2px;
  }

  .entry::before {
    content: "";
    width: 1px;
    height: 14px;
    margin: 4px -10px 0 9px;
    border-left: 1px dotted #000;
    z-index: 1;
  }

  .entry input {
    flex: 1;
    width: 100%;
    min-width: 0;
    padding: 0 0 7px 8px;
    border: 2px solid;
    border-color: rgb(0 0 0 / 40%) rgb(255 255 255 / 55%) rgb(255 255 255 / 55%) rgb(0 0 0 / 40%);
  }

  .pick {
    position: relative;
    display: flex;
    flex: 1;
  }

  .pick::after {
    content: "";
    position: absolute;
    top: 50%;
    right: 7px;
    width: 12px;
    height: 7px;
    margin-top: -3px;
    border: 2px solid;
    border-color: var(--lit) var(--shade) var(--shade) var(--lit);
    pointer-events: none;
  }

  .pick select {
    flex: 1;
    padding-left: 4px;
    border: 2px solid;
    border-color: var(--lit) var(--shade) var(--shade) var(--lit);
  }

  /* drill tool manager */
  .drill {
    position: absolute;
    top: 90px;
    left: 259px;
    width: 772px;
    padding: 4px 3px 3px;
    border: 1px solid;
    border-color: #f4f0e8 #555 #555 #f4f0e8;
    background: #d4d0c8;
    white-space: nowrap;
  }

  .drill .title {
    height: 18px;
  }

  .drill-body {
    background: var(--green);
  }

  .row {
    display: flex;
    height: 33px;
  }

  .box {
    display: flex;
    align-items: center;
    padding: 2px;
    border: 1px solid #000;
  }

  .box.teal {
    background: var(--teal);
  }

  .box button {
    flex: 1;
    align-self: stretch;
    height: auto;
    padding: 0 1px;
  }

  .box .entry {
    align-self: stretch;
    padding: 0;
  }

  .box .pick {
    align-self: stretch;
  }

  .layer-name {
    width: 167px;
  }

  .box .wide {
    display: flex;
    align-items: center;
    justify-content: space-between;
  }

  .wide span {
    padding-right: 10px;
  }

  .layer-value {
    width: 110px;
  }

  .layer-value .entry {
    flex: 1;
  }

  .slots {
    width: 187px;
    margin-left: 150px;
    padding-left: 9px;
    gap: 8px;
  }

  .second {
    height: 29px;
  }

  .second .entry input {
    padding-bottom: 3px;
  }

  .board {
    width: 307px;
    gap: 3px;
  }

  .board .entry {
    width: 104px;
    margin-left: 12px;
  }

  .params {
    width: 176px;
  }

  .hasl {
    width: 128px;
    margin-left: 3px;
  }

  .hasl .entry {
    flex: 1;
  }

  .table-frame {
    height: 305px;
    margin: 0 2px;
    padding-left: 1px;
    overflow: hidden;
    border: 2px solid;
    border-color: #2f7f70 #a0ecd8 #a0ecd8 #2f7f70;
  }

  .tools {
    width: 768px;
    border-collapse: collapse;
    table-layout: fixed;
  }

  .c26 {
    width: 26px;
  }

  .c60 {
    width: 60px;
  }

  .c68 {
    width: 68px;
  }

  .c74 {
    width: 74px;
  }

  .c82 {
    width: 82px;
  }

  .c83 {
    width: 83px;
  }

  .c116 {
    width: 116px;
  }

  .tools th {
    height: 38px;
    padding: 0 0 3px;
    border: 2px solid #000;
    border-bottom-width: 3px;
    background: #b3fffd;
    line-height: 15px;
  }

  .tools .next {
    text-align: left;
  }

  .tools td {
    height: 33px;
    padding: 1px;
    border: 2px solid #000;
  }

  .tools td button {
    display: block;
    width: 100%;
    height: 28px;
    padding-left: 2px;
    border-color: #a0ecd8 #2f7f70 #2f7f70 #a0ecd8;
    background: var(--green);
    text-align: left;
  }

  .tools td button.current {
    background: #ffc84e;
  }

  .tools .num {
    padding-right: 4px;
    text-align: right;
  }

  .tools .entry {
    height: 28px;
    padding: 0;
  }

  .tools .entry::before {
    margin-top: 3px;
  }

  .white {
    background: #fff;
  }

  .tools .entry input {
    border-color: #999 #ccc #ccc #999;
  }

  .yellow {
    background: #ffffce;
  }

  .tools .yellow .entry input {
    border-color: #a8a888 #d0d0b0 #d0d0b0 #a8a888;
  }

  .yellow .pick {
    height: 27px;
    margin-left: 4px;
  }

  .yellow .pick select,
  .yellow .pick::after {
    border-color: #d0d0b0 #a8a888 #a8a888 #d0d0b0;
  }

  .tools .focus {
    box-shadow: inset 0 0 0 2px #000;
  }

  .sym {
    display: block;
    margin: 0 auto;
  }

  .sym text {
    font: bold 8px var(--mono);
  }

  .hscroll {
    display: flex;
    align-items: center;
    height: 16px;
    margin: 4px 2px;
    border: 2px solid;
    border-color: #2f7f70 #a0ecd8 #a0ecd8 #2f7f70;
    background: #46ac92;
  }

  .hscroll .thumb {
    flex: 1;
    align-self: stretch;
    margin-right: 64px;
    border: 2px solid;
    border-color: #a0ecd8 #2f7f70 #2f7f70 #a0ecd8;
    background: var(--green);
  }

  .nav {
    height: 35px;
    margin-bottom: 4px;
    border: 1px solid #000;
  }

  .current-tool {
    width: 42px;
    margin-right: 3px;
    background: #ffc84e;
    font-size: 12px;
  }

  .box .arrow {
    padding: 0 2px;
    font-size: 12px;
  }

  .nav label {
    padding: 7px 3px;
  }

  .nav .index {
    width: 59px;
    margin: 0 5px 0 2px;
    padding: 1px 0;
  }

  .nav .sq {
    display: flex;
    align-items: center;
    width: 24px;
  }

  .units {
    width: 88px;
    margin-left: auto;
    padding-left: 6px;
  }

  .mode {
    width: 115px;
    padding-left: 6px;
  }

  .merge {
    height: 33px;
  }

  .blank {
    width: 214px;
  }

  .merge-tools {
    flex: 1;
    gap: 18px;
    padding-left: 10px;
  }

  .actions {
    height: 29px;
  }

  .actions .box {
    flex: 1;
  }

  .scribble {
    position: absolute;
    top: 180px;
    left: 429px;
    filter: drop-shadow(1px 2px 2px #555);
  }

  /* word processor */
  .word {
    position: absolute;
    top: 151px;
    right: 0;
    bottom: -13px;
    left: 1084px;
    display: flex;
    flex-direction: column;
    padding: 3px 0 0 3px;
    border: 1px solid;
    border-color: #f4f0e8 #555 #555 #f4f0e8;
    background: #d4d0c8;
    font: 12px/18px var(--han);
    white-space: nowrap;
  }

  .word-title {
    display: flex;
    align-items: center;
    flex: none;
    height: 18px;
    gap: 2px;
    overflow: hidden;
    background: linear-gradient(90deg, #0c2a70, #a4c8f0);
    color: #fff;
    font: bold 12px/18px "Liberation Mono", "Noto Sans CJK SC", monospace;
  }

  .word-title button {
    width: 16px;
    height: 14px;
    margin: 0 -10px 0 auto;
    border: 1px solid #fff;
    background: #d4d0c8;
  }

  .tools-row,
  .word-menu {
    display: flex;
    align-items: center;
    flex: none;
    height: 26px;
    padding-left: 5px;
    background: linear-gradient(#f6f5f1, #dedbd2);
  }

  .grip {
    flex: none;
    width: 3px;
    height: 16px;
    margin-right: 1px;
    background: repeating-linear-gradient(#a8a498 0 2px, transparent 2px 4px);
  }

  .tb {
    display: flex;
    align-items: center;
    justify-content: center;
    flex: none;
    width: 23px;
    height: 22px;
  }

  .tb.on {
    border: 1px solid #22448c;
    background: #e0e4ee;
  }

  .icon {
    display: block;
    flex: none;
  }

  .sep {
    flex: none;
    width: 1px;
    height: 16px;
    margin: 0 2px;
    background: #a8a498;
  }

  .drop {
    flex: none;
    width: 11px;
    height: 22px;
  }

  .drop::before {
    content: "";
    display: block;
    width: 6px;
    margin: 0 auto;
    border: 3px solid transparent;
    border-top-color: #000;
    border-bottom: 0;
  }

  .drop.faded::before {
    border-top-color: #999;
  }

  .trad {
    font-size: 16px;
  }

  .serif {
    font: bold 15px/18px "Liberation Serif", serif;
  }

  .letter-I {
    font-style: italic;
  }

  .letter-U {
    text-decoration: underline;
  }

  .boxed span {
    width: 16px;
    border: 1px solid #22448c;
    line-height: 14px;
  }

  .shaded span {
    width: 15px;
    background: #a8a8a8;
    line-height: 15px;
  }

  .mark span {
    border-bottom: 4px solid #fff;
    background: #f0e840;
    line-height: 12px;
  }

  .color span {
    width: 16px;
    border-bottom: 4px solid #e01010;
    color: #2f4f98;
    line-height: 14px;
  }

  .pinyin {
    flex-direction: column;
    font-size: 9px;
    line-height: 9px;
  }

  .pinyin b {
    color: #2f58b8;
    font-size: 11px;
    line-height: 13px;
  }

  .ring span {
    width: 17px;
    height: 17px;
    border: 1px solid #000;
    border-radius: 50%;
    line-height: 14px;
  }

  .combo {
    height: 17px;
    margin-right: 3px;
    padding-left: 2px;
    background:
      linear-gradient(45deg, transparent 50%, #000 50%) right 7px top 7px / 3px 3px no-repeat,
      linear-gradient(-45deg, transparent 50%, #000 50%) right 4px top 7px / 3px 3px no-repeat,
      linear-gradient(#e4e1d8, #e4e1d8) right / 12px 100% no-repeat,
      #fff;
    line-height: 17px;
  }

  .combo.zoom {
    width: 59px;
    margin: 0 2px;
  }

  .combo.style {
    width: 82px;
    margin-left: 2px;
  }

  .combo.font {
    width: 123px;
  }

  .combo.size {
    width: 51px;
    margin-right: 1px;
  }

  .read {
    display: flex;
    align-items: center;
    margin-left: 6px;
  }

  .cap {
    width: 11px;
    height: 24px;
    margin-left: 4px;
    border-radius: 0 4px 4px 0;
    background: linear-gradient(#a8a498, #6a675e);
  }

  .word-menu {
    height: 25px;
    border-bottom: 1px solid #777;
  }

  .word-menu button {
    width: 58px;
    padding-left: 8px;
    text-align: left;
  }

  .word-menu input {
    flex: 1;
    min-width: 0;
    height: 18px;
    margin-left: 148px;
    padding-left: 3px;
    background: #fff;
  }

  .word-menu input::placeholder {
    color: #8a8a8a;
  }

  .ruler {
    display: flex;
    flex: none;
    height: 24px;
    padding: 4px 0 0 5px;
    font-size: 10px;
    line-height: 12px;
  }

  .tab-kind {
    width: 15px;
    height: 15px;
    margin-right: 26px;
    border: 1px solid #777;
  }

  .tab-kind::before {
    content: "";
    display: block;
    width: 7px;
    height: 7px;
    margin: 3px;
    border: solid #000;
    border-width: 0 0 2px 2px;
  }

  .scale {
    position: relative;
    display: flex;
    flex: 1;
    height: 12px;
    margin-top: 1px;
  }

  .outside {
    background: #808080;
  }

  .outside.left {
    width: 45px;
    margin-right: 1px;
    padding-left: 16px;
  }

  .outside.right {
    flex: 1;
    padding-left: 26px;
  }

  .inside {
    display: flex;
    width: 696px;
    padding-left: 14px;
    background: #fff;
  }

  .inside span {
    width: 28px;
    text-align: center;
  }

  .indents {
    position: absolute;
    top: -4px;
    left: 64px;
  }

  .right-indent {
    position: absolute;
    top: 3px;
    right: 37px;
  }

  .doc {
    display: flex;
    flex: 1;
    min-height: 0;
    overflow: hidden;
  }

  .side-ruler {
    flex: none;
    margin: 19px 5px 0 6px;
  }

  .side-ruler text {
    font-size: 10px;
  }

  .paper-area {
    flex: 1;
    padding: 15px 0 0 19px;
    background: #808080;
  }

  article {
    position: relative;
    height: 100%;
    padding: 51px 0 0 48px;
    border: solid #000;
    border-width: 1px 0 0 1px;
    background: #fff;
    font: 14px/21px "Liberation Serif", "Noto Sans CJK SC", serif;
  }

  article p {
    height: 21px;
    margin: 0;
  }

  article s {
    margin-left: 6px;
    color: #888;
    font: 10px "DejaVu Sans", sans-serif;
    text-decoration: none;
  }

  .corner {
    position: absolute;
    top: 28px;
    width: 24px;
    height: 24px;
    border: solid #999;
    border-width: 0 0 1px;
  }

  .tl {
    left: 24px;
    border-right-width: 1px;
  }

  .tr {
    right: 18px;
    border-left-width: 1px;
  }

  article .quote {
    height: 25px;
    padding: 2px;
    color: #222;
    font: bold 13px/21px "Liberation Sans", sans-serif;
  }

  .hot {
    display: inline-block;
    height: 21px;
    background: #f01010;
    font-size: 16px;
  }

  .head {
    font-weight: bold;
  }

  .item {
    padding-left: 28px;
  }

  .item s:first-of-type,
  .head s:first-of-type {
    margin: 0 2px;
  }

  .cont {
    padding-left: 52px;
  }

  mark {
    display: inline-block;
    background: #000;
    color: #fff;
    line-height: 18px;
  }

  mark span {
    font: 12px/18px "Liberation Mono", monospace;
  }

  .figure {
    display: flex;
    align-items: flex-end;
    height: 207px;
    padding: 10px 0 13px 57px;
  }

  .figure table,
  .hole-box table {
    border-collapse: collapse;
    table-layout: fixed;
    font-family: "Liberation Sans", sans-serif;
    white-space: normal;
  }

  .thick {
    width: 389px;
    font-size: 13px;
    line-height: 18px;
  }

  .thick th,
  .thick td {
    height: 20px;
    padding: 0 3px;
    border: 1px solid #000;
    text-align: left;
    white-space: nowrap;
  }

  .thick th:first-child {
    width: 121px;
  }

  .thick .sub th {
    height: 26px;
    padding-bottom: 4px;
  }

  .thick .mid,
  .holes .mid {
    text-align: center;
  }

  .hole-box {
    position: relative;
    width: 394px;
    margin: 1px 0 0 58px;
  }

  .holes {
    width: 394px;
    font-size: 14px;
    line-height: 16px;
  }

  .holes th,
  .holes td {
    padding: 1px 4px;
    border: 2px solid #000;
    vertical-align: top;
  }

  .holes tbody tr:first-child {
    height: 24px;
  }

  .holes tbody tr:nth-child(2),
  .holes tbody tr:nth-child(3) {
    height: 39px;
  }

  .holes tbody tr:nth-child(4) {
    height: 21px;
  }

  .holes th:first-child {
    width: 143px;
  }

  .holes th:nth-child(2) {
    width: 82px;
  }

  .frame {
    position: absolute;
    top: 132px;
    left: -22px;
    width: 416px;
    height: 30px;
    border: 4px solid #20e020;
    box-shadow: 1px 2px 4px #555, inset 1px 2px 4px #777;
  }

  .views {
    display: flex;
    flex: none;
    height: 17px;
    padding-left: 4px;
  }

  .views button {
    display: flex;
    align-items: center;
    justify-content: center;
    width: 15px;
    border: 1px solid;
    border-color: #fff #555 #555 #fff;
  }

  .track {
    flex: 1;
    border: 1px solid;
    border-color: #fff #555 #555 #fff;
  }

  .status {
    display: flex;
    flex: none;
    gap: 22px;
    height: 18px;
    padding-left: 55px;
    border-top: 1px solid #777;
    line-height: 16px;
  }

  .dim {
    color: #999;
  }
</style>
